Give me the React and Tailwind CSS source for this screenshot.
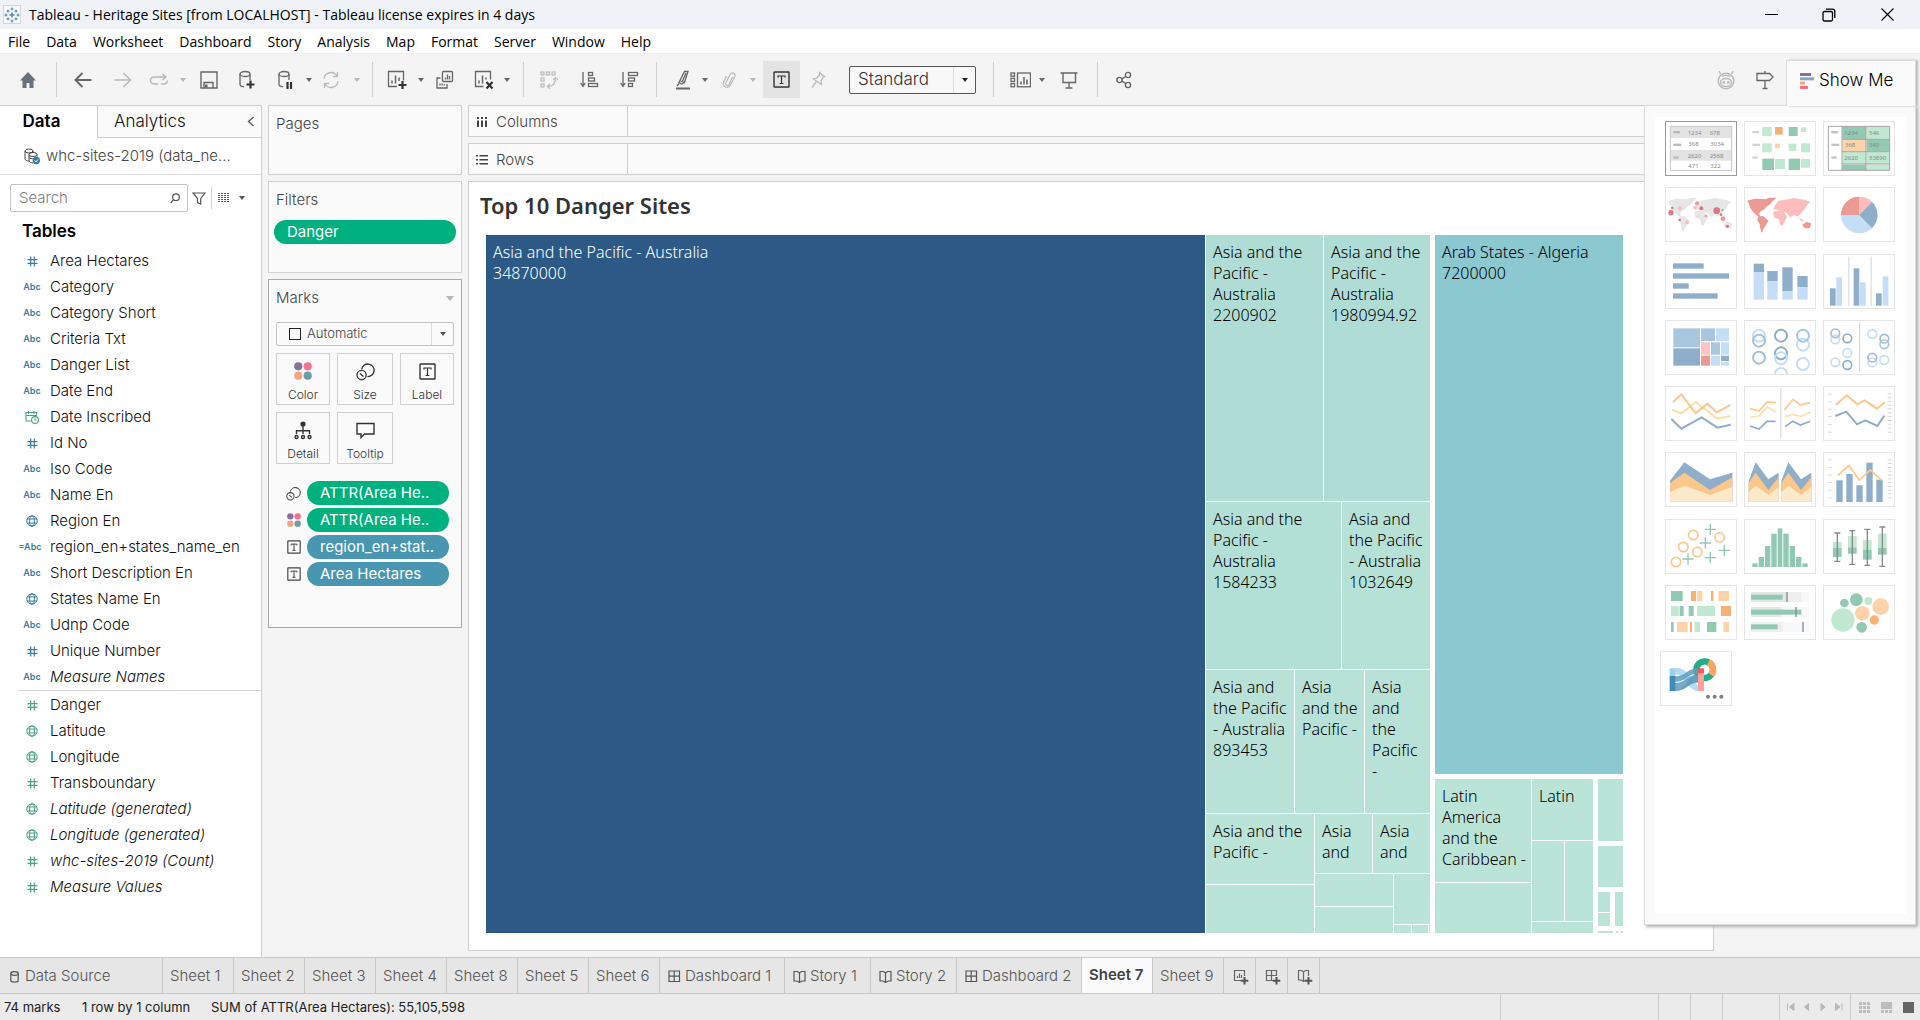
import React from 'react';

const UI = 'font-["Inter",sans-serif]';

/* ---------- small glyphs ---------- */

const Svg = ({ w = 20, h = 20, vb, className = '', children, ...p }) => (
  <svg width={w} height={h} viewBox={vb || `0 0 ${w} ${h}`} className={`shrink-0 ${className}`} fill="none" stroke="currentColor" aria-hidden="true" {...p}>
    {children}
  </svg>
);

const Caret = ({ className = '' }) => (
  <Svg w={8} h={5} className={className}>
    <path d="M0 0h8L4 5z" fill="currentColor" stroke="none" />
  </Svg>
);

const LabelGlyph = ({ size = 17 }) => (
  <Svg w={size} h={size} vb="0 0 17 17" strokeWidth="1.4">
    <rect x="1" y="1" width="15" height="15" rx="0.5" />
    <path d="M5 6.6V5h7v1.6M8.500 5v7.500M6.600 12.500h3.800" strokeWidth="1.200" />
  </Svg>
);

const ColorGlyph = ({ size = 18 }) => (
  <Svg w={size} h={size} vb="0 0 18 18" stroke="none">
    <circle cx="4.300" cy="4.300" r="4.100" fill="#86719b" />
    <circle cx="13.700" cy="4.300" r="4.100" fill="#f8708a" />
    <circle cx="4.300" cy="13.700" r="4.100" fill="#f3a57f" />
    <circle cx="13.700" cy="13.700" r="4.100" fill="#6d9aa8" />
  </Svg>
);

const SizeGlyph = ({ size = 19 }) => (
  <Svg w={size} h={size} vb="0 0 19 19" strokeWidth="1.300">
    <path d="M5.600 7.300a6.300 6.300 0 1 1 5.800 7.300" />
    <circle cx="5.600" cy="13" r="4.600" />
    <path d="M4 11.500l3.400 3" />
  </Svg>
);

const DetailGlyph = () => (
  <Svg w={18} h={19} strokeWidth="1.400">
    <circle cx="9" cy="3" r="2.600" fill="currentColor" stroke="none" />
    <path d="M9 4v9M2.500 13V9.700h13V13" />
    <circle cx="2.500" cy="16" r="1.500" />
    <circle cx="9" cy="16" r="1.500" />
    <circle cx="15.500" cy="16" r="1.500" />
  </Svg>
);

const TooltipGlyph = () => (
  <Svg w={19} h={17} strokeWidth="1.400">
    <path d="M1 1.500h17v10.500H8.500l-3.500 3.600V12H1z" />
  </Svg>
);

/* ---------- window chrome ---------- */

function TitleBar() {
  return (
    <header className="flex h-[29px] items-center bg-[#eff3f8] pl-[3px] text-[14px] text-black">
      <span className="flex h-[19px] w-[18px] items-center justify-center border border-[#d5d5d5] bg-[#f7f7f7] text-[#4d8fb9]">
        <Svg w={16} h={16} strokeWidth="1.200">
          <path d="M8 5.500v5M5.500 8h5" strokeWidth="1.600" />
          <path d="M8 .5v3M6.500 2h3M8 12.500v3M6.500 14h3M.5 8h3M2 6.500v3M12.500 8h3M14 6.500v3M4 2.800v2.800M2.600 4.200h2.800M12 2.800v2.800M10.600 4.200h2.800M4 10.400v2.800M2.600 11.800h2.800M12 10.400v2.800M10.600 11.800h2.800" />
        </Svg>
      </span>
      <h1 className="ml-2">Tableau - Heritage Sites [from LOCALHOST] - Tableau license expires in 4 days</h1>
      <div className="ml-auto flex pr-1">
        <button aria-label="Minimize" className="flex w-[58px] items-center justify-center">
          <Svg w={13} h={13}><path d="M0 6.500h13" /></Svg>
        </button>
        <button aria-label="Restore" className="flex w-[58px] items-center justify-center">
          <Svg w={14} h={14} strokeWidth="1.300">
            <rect x="1" y="3.500" width="9.500" height="9.500" rx="1.500" />
            <path d="M4 1.200h6.500a2.300 2.300 0 0 1 2.300 2.300V10" />
          </Svg>
        </button>
        <button aria-label="Close" className="flex w-[58px] items-center justify-center">
          <Svg w={13} h={13} strokeWidth="1.200"><path d="M.5.5l12 12M12.500.5l-12 12" /></Svg>
        </button>
      </div>
    </header>
  );
}

const MENUS = ['File', 'Data', 'Worksheet', 'Dashboard', 'Story', 'Analysis', 'Map', 'Format', 'Server', 'Window', 'Help'];

function MenuBar() {
  return (
    <nav className="flex h-[25px] items-center gap-4 border-b border-[#efefef] bg-white pl-2 text-[14px] text-black">
      {MENUS.map((m) => (
        <button key={m}>{m}</button>
      ))}
    </nav>
  );
}

/* ---------- toolbar ---------- */

const Tool = ({ label, w = 'w-10', dim, className = '', children }) => (
  <button aria-label={label} className={`flex h-[37px] shrink-0 items-center justify-center ${w} ${dim ? 'text-[#b9b9b9]' : 'text-[#666]'} ${className}`}>
    {children}
  </button>
);

const Drop = ({ label, w = 'w-2', dim }) => (
  <button aria-label={label} className={`flex h-[37px] shrink-0 items-center justify-center ${w} ${dim ? 'text-[#b9b9b9]' : 'text-[#666]'}`}>
    <Svg w={6} h={4}><path d="M0 0h6L3 4z" fill="currentColor" stroke="none" /></Svg>
  </button>
);

const Sep = ({ className = '' }) => <span className={`h-[35px] w-px shrink-0 bg-[#cfcfcf] ${className}`} />;

function Toolbar() {
  return (
    <div className={`flex h-[51px] items-center bg-[#f4f4f4] pr-1 ${UI}`}>
      <Tool label="Start page" w="w-[56px]">
        <Svg w={18} h={18} stroke="none"><path d="M9 1L1 9.500h2.500V17h4v-5h3v5h4V9.500H17z" fill="#65717e" /></Svg>
      </Tool>
      <Sep />
      <Tool label="Undo" className="ml-1.5">
        <Svg w={18} h={16} strokeWidth="2"><path d="M17.500 8H2M8.500 1L1.500 8l7 7" /></Svg>
      </Tool>
      <Tool label="Redo" dim>
        <Svg w={18} h={16} strokeWidth="1.500"><path d="M.5 8H16M9.500 1l7 7-7 7" /></Svg>
      </Tool>
      <Tool label="Replay" w="w-8" dim>
        <Svg w={20} h={14} strokeWidth="1.400"><path d="M9 11H5a3.500 3.500 0 0 1 0-7h12M13.500 1L17 4l-3.500 3M12 11h3a3.500 3.500 0 0 0 3.500-3.500" /></Svg>
      </Tool>
      <Drop label="Replay options" w="w-4" dim />
      <Tool label="Save" w="w-9">
        <Svg w={18} h={18} strokeWidth="1.400"><path d="M1 1h16v16H1zM4 17v-5.500h9V17" /><rect x="5" y="13.500" width="2.500" height="3" fill="currentColor" stroke="none" /></Svg>
      </Tool>
      <Tool label="New data source">
        <Svg w={18} h={20} strokeWidth="1.300">
          <ellipse cx="7" cy="4" rx="5" ry="2.500" /><path d="M2 4v10.500c0 1 1.500 2 4 2.300M12 4v6" /><path d="M12.500 10.500v8M8.500 14.500h8" strokeWidth="2.200" stroke="#333" />
        </Svg>
      </Tool>
      <Tool label="Pause updates" w="w-[38px]">
        <Svg w={18} h={20} strokeWidth="1.300">
          <ellipse cx="7" cy="4" rx="5" ry="2.500" /><path d="M2 4v10.500c0 1 1.500 2 4 2.300M12 4v6" /><path d="M10.500 12v7M14 12v7" strokeWidth="2.200" stroke="#333" />
        </Svg>
      </Tool>
      <Drop label="Pause options" />
      <Tool label="Refresh" w="w-9" dim>
        <Svg w={18} h={18} strokeWidth="1.300"><path d="M2 8a7 7 0 0 1 13-3M15.500 1v4.500H11M16 10a7 7 0 0 1-13 3M2.500 17v-4.500H7" /></Svg>
      </Tool>
      <Drop label="Refresh options" w="w-4" dim />
      <Sep className="ml-[7px]" />
      <Tool label="New worksheet" className="ml-1">
        <Svg w={20} h={20} strokeWidth="1.300">
          <path d="M10 16.500H1.500v-15h15v9" /><path d="M5 13.500v-3M8.500 13.500v-8M12 11V7.500" strokeWidth="1.500" /><path d="M15.500 11v8M11.500 15h8" strokeWidth="2.200" stroke="#333" />
        </Svg>
      </Tool>
      <Drop label="New worksheet options" />
      <Tool label="Duplicate">
        <Svg w={20} h={20} strokeWidth="1.300">
          <rect x="7.500" y="1.500" width="10" height="10" rx="1" /><path d="M10.500 9.500v-2M12.500 9.500v-5M14.500 9.500V6" /><path d="M5.500 8H2v10h10v-4M5 15.500v-2M7.200 15.500v-2M9.400 15.500v-1.500" />
        </Svg>
      </Tool>
      <Tool label="Clear sheet" w="w-[38px]">
        <Svg w={20} h={20} strokeWidth="1.300">
          <path d="M9.500 16.500H1.500v-15h15v8" /><path d="M5 13.500v-3M8.500 13.500v-8M12 9.500V7.500" strokeWidth="1.500" /><path d="M12.500 12l6 6.500M18.500 12l-6 6.500" strokeWidth="2.200" stroke="#333" />
        </Svg>
      </Tool>
      <Drop label="Clear options" />
      <Sep className="ml-3" />
      <Tool label="Swap rows and columns" w="w-[50px]" dim>
        <Svg w={18} h={18} strokeWidth="1.200">
          <rect x="1" y="1" width="3" height="3" /><rect x="6.500" y="1" width="3" height="3" /><rect x="12" y="1" width="3" height="3" /><rect x="1" y="7" width="3" height="3" /><rect x="1" y="13" width="3" height="3" />
          <path d="M7.500 15.500c5 0 8-3 8-8.500M13 9l2.500-2.500L18 9M10 13l-2.500 2.500L10 18" />
        </Svg>
      </Tool>
      <Tool label="Sort ascending" w="w-[30px]">
        <Svg w={19} h={17} strokeWidth="1.300"><path d="M3 1v14M.7 12L3 15.300 5.300 12" /><rect x="8.500" y="1.500" width="4" height="3" /><rect x="8.500" y="7" width="6" height="3" /><rect x="8.500" y="12.500" width="9" height="3" /></Svg>
      </Tool>
      <Tool label="Sort descending" w="w-[50px]">
        <Svg w={19} h={17} strokeWidth="1.300"><path d="M3 1v14M.7 12L3 15.300 5.300 12" /><rect x="8.500" y="1.500" width="9" height="3" /><rect x="8.500" y="7" width="6" height="3" /><rect x="8.500" y="12.500" width="4" height="3" /></Svg>
      </Tool>
      <Sep className="ml-0.5" />
      <Tool label="Highlight" w="w-9" className="ml-2">
        <Svg w={16} h={20} strokeWidth="1.300"><path d="M9.500 1.500h3.500L9.500 12.500l-3 1.500-2.500-1.500zM4.500 10.500l5 2M2 16l2-2.500M11 3L7.500 11" /><path d="M1 18.500h14" strokeWidth="2" /></Svg>
      </Tool>
      <Drop label="Highlight options" />
      <Tool label="Group members" dim>
        <Svg w={16} h={18} strokeWidth="1.200"><path d="M11.500 6L8 13.500c-1 2-4 .8-3.200-1.300L9 3.500c1.500-3 6-1.300 4.800 2L9.500 14c-2 4.200-8.500 2-7-2.500L5.500 5" /></Svg>
      </Tool>
      <Drop label="Group options" dim />
      <Tool label="Show mark labels" w="w-[37px]" className="ml-1.5 bg-[#e4e4e4] !text-[#333]">
        <LabelGlyph />
      </Tool>
      <Tool label="Fix axes" w="w-9" dim>
        <Svg w={16} h={18} strokeWidth="1.300"><path d="M9.500 1.500l5 4-1.500.6-2 4 .3 3.400-7.800-5.500 3-.8 3-3.200zM6 11l-4 5.500" /></Svg>
      </Tool>
      <div className="relative ml-[13px] flex h-[28px] w-[127px] shrink-0 items-center rounded-[2px] border border-[#555] bg-[#f8f8f8] text-[#333]">
        <select aria-label="Fit" className="h-full w-full appearance-none bg-transparent pl-2 text-[17px] font-light outline-none">
          <option>Standard</option>
        </select>
        <span className="pointer-events-none absolute right-0 flex h-full w-[22px] items-center justify-center border-l border-[#ddd]"><Svg w={6} h={4}><path d="M0 0h6L3 4z" fill="#222" stroke="none" /></Svg></span>
      </div>
      <Sep className="ml-[17px]" />
      <Tool label="Show or hide cards" w="w-9" className="ml-2">
        <Svg w={21} h={16} strokeWidth="1.300">
          <rect x="1" y="1" width="3.500" height="3.200" /><rect x="1" y="6.300" width="3.500" height="3.200" /><rect x="1" y="11.600" width="3.500" height="3.200" /><rect x="7.500" y="1" width="13" height="13.800" /><path d="M11 12.500V9.500M14 12.500V5M17 12.500V7.500" strokeWidth="1.600" />
        </Svg>
      </Tool>
      <Drop label="Card options" />
      <Tool label="Presentation mode" w="w-[46px]">
        <Svg w={18} h={18} strokeWidth="1.400"><path d="M.5 2h17M3 2v9.500h12.500V2M9 11.500v5M5.500 17h7" /></Svg>
      </Tool>
      <Sep className="ml-[5px]" />
      <Tool label="Share" w="w-[52px]">
        <Svg w={16} h={18} strokeWidth="1.400"><circle cx="3.500" cy="9" r="2.600" /><circle cx="12" cy="4" r="2.600" /><circle cx="12" cy="14" r="2.600" /><path d="M6 7.800L9.600 5.500M6 10.200l3.600 2.300" /></Svg>
      </Tool>
      <Tool label="Ask Data" w="w-9" dim className="ml-auto">
        <Svg w={20} h={20} strokeWidth="1.400"><circle cx="10" cy="11" r="7.800" /><ellipse cx="10" cy="12.500" rx="5.500" ry="4" /><path d="M4.500 4L3 1.200M15.500 4L17 1.200M6 6.500c2-1.500 6-1.500 8 0" /><path d="M6.500 12.500h2.500M11 12.500h2.500" strokeWidth="2.500" /></Svg>
      </Tool>
      <Tool label="Guide" w="w-[42px]">
        <Svg w={20} h={20} strokeWidth="1.300"><path d="M2 3.500h12.500l3.500 3.500-3.500 3.500H2zM10 1v2M10 10.500V19M7.500 18.500h5" /></Svg>
      </Tool>
      <button className="relative z-20 -mb-px flex h-[46px] w-[130px] shrink-0 items-center self-end border border-b-0 border-[#dcdcdc] bg-[#fafafa] pb-1.5 pl-[13px] text-[17px] text-black shadow-[2px_0_2px_#bbb]">
        <Svg w={15} h={16} stroke="none">
          <path d="M0 0h11v3H0z" fill="#86719b" /><path d="M0 4.300h14v3H0z" fill="#7fa6cc" /><path d="M0 8.600h5v3H0z" fill="#fba57c" /><path d="M0 12.900h8v3H0z" fill="#fc6f7d" />
        </Svg>
        <span className="ml-1 font-light">Show Me</span>
      </button>
    </div>
  );
}

/* ---------- data pane ---------- */

const DIMENSIONS = [
  ['num', 'Area Hectares'], ['abc', 'Category'], ['abc', 'Category Short'], ['abc', 'Criteria Txt'], ['abc', 'Danger List'],
  ['abc', 'Date End'], ['date', 'Date Inscribed'], ['num', 'Id No'], ['abc', 'Iso Code'], ['abc', 'Name En'], ['geo', 'Region En'],
  ['calc', 'region_en+states_name_en'], ['abc', 'Short Description En'], ['geo', 'States Name En'], ['abc', 'Udnp Code'],
  ['num', 'Unique Number'], ['abc', 'Measure Names', true],
];
const MEASURES = [
  ['num', 'Danger'], ['geo', 'Latitude'], ['geo', 'Longitude'], ['num', 'Transboundary'], ['geo', 'Latitude (generated)', true],
  ['geo', 'Longitude (generated)', true], ['num', 'whc-sites-2019 (Count)', true], ['num', 'Measure Values', true],
];

function FieldIcon({ kind }) {
  if (kind === 'abc') return <span className="text-[9px] font-semibold">Abc</span>;
  if (kind === 'calc') return <span className="-ml-1 text-[9px] font-semibold">=Abc</span>;
  if (kind === 'date')
    return (
      <Svg w={14} h={14} className="text-[#46a583]" strokeWidth="1.100">
        <path d="M6 11H1V2.500h10.500V6M1 5.500h10.500M3.500 1v3M9 1v3" /><circle cx="10" cy="10" r="3.400" /><path d="M10 8.300V10h1.500" />
      </Svg>
    );
  if (kind === 'geo')
    return (
      <Svg w={12} h={12} strokeWidth="1"><circle cx="6" cy="6" r="5.200" /><ellipse cx="6" cy="6" rx="2.500" ry="5.200" /><path d="M1.500 4h9M1.500 8h9" /></Svg>
    );
  return <Svg w={11} h={11} strokeWidth="1.200"><path d="M3.700.5v10M7.300.5v10M.5 3.700h10M.5 7.300h10" /></Svg>;
}

const FieldList = ({ fields, color }) => (
  <ul>
    {fields.map(([kind, name, generated]) => (
      <li key={name}>
        <button className="flex h-[26px] w-full items-center pl-[14px] text-left">
          <span className={`flex w-9 items-center justify-center ${color}`}><FieldIcon kind={kind} /></span>
          <span className={generated ? 'italic' : ''}>{name}</span>
        </button>
      </li>
    ))}
  </ul>
);

function DataPane() {
  return (
    <aside className="flex w-[262px] shrink-0 flex-col border-t border-r border-[#cfcfcf] bg-white text-[15px] text-[#111]">
      <div className="flex h-[32px]" role="tablist">
        <button role="tab" aria-selected="true" className="w-[97px] pr-[14px] text-center text-[17px] font-semibold text-black">Data</button>
        <div className="flex flex-1 items-center justify-between border-b border-l border-[#cfcfcf] bg-[#fafafa] pr-[6px] pl-4">
          <button role="tab" aria-selected="false" className="text-[17px] font-light">Analytics</button>
          <button aria-label="Collapse" className="text-[#555]"><Svg w={8} h={11} strokeWidth="1.300"><path d="M6.500 1l-5 4.500 5 4.500" /></Svg></button>
        </div>
      </div>
      <button className="flex h-[37px] items-center border-b border-[#dedede] pl-6 text-[#444]">
        <Svg w={16} h={17} strokeWidth="1">
          <ellipse cx="5" cy="3" rx="4" ry="2" /><path d="M1 3v8c0 1 2 2 4 2M9 3v1" /><ellipse cx="9" cy="6.500" rx="4" ry="2" /><path d="M5 6.500v6c0 1.500 2 2.500 4 2.500M13 6.500v2M5 9.500c1 1 3 1.500 4.500 1" />
          <circle cx="12.300" cy="12.500" r="3.700" fill="#2f7fa6" stroke="none" /><path d="M10.500 12.500l1.400 1.400 2.400-2.600" stroke="#fff" />
        </Svg>
        <span className="ml-[6px] font-light">whc-sites-2019 (data_ne...</span>
      </button>
      <div className="mt-[9px] flex h-7 items-center pl-[10px]">
        <label className="flex h-7 w-[178px] items-center rounded-[2px] border border-[#c4c4c4] pr-[7px] text-[#555]">
          <input type="search" placeholder="Search" aria-label="Search" className="w-0 flex-1 bg-transparent pl-2 text-[15px] font-light outline-none placeholder:text-[#808080]" />
          <Svg w={10} h={11} strokeWidth="1.200"><circle cx="6" cy="4.200" r="3.300" /><path d="M3.600 6.700L.6 10" /></Svg>
        </label>
        <button aria-label="Filter fields" className="ml-1 text-[#555]"><Svg w={14} h={13} strokeWidth="1.200"><path d="M1 1h12L8.700 6.500V12L5.500 10.500v-4z" /></Svg></button>
        <span className="ml-[5px] h-[22px] w-px bg-[#cfcfcf]" />
        <button aria-label="View options" className="ml-[6px] flex items-center gap-[9px] text-[#555]">
          <Svg w={12} h={10} strokeWidth="1" strokeDasharray="2 1" shapeRendering="crispEdges"><path d="M0 .5h12M0 2.500h12M0 4.500h12M0 6.500h12M0 8.500h12" /></Svg>
          <Svg w={6} h={4}><path d="M0 0h6L3 4z" fill="#555" stroke="none" /></Svg>
        </button>
      </div>
      <h2 className="mt-[7px] mb-[5px] pl-[22px] text-[17px] leading-6 font-semibold text-black">Tables</h2>
      <div className="font-light">
        <FieldList fields={DIMENSIONS} color="text-[#3a7d9d]" />
        <hr className="mb-px ml-[18px] border-[#d4d4d4]" />
        <FieldList fields={MEASURES} color="text-[#46a583]" />
      </div>
    </aside>
  );
}

/* ---------- cards ---------- */

const Pill = ({ color, children }) => (
  <button className={`h-6 flex-1 rounded-full pl-[13px] text-left text-[15px] leading-6 text-white ${color}`}>{children}</button>
);

const MarkButton = ({ icon, children }) => (
  <button className="flex h-[52px] flex-col items-center border border-[#d0d0d0] bg-[#fafafa] text-[12px] text-[#333]">
    <span className="flex h-[34px] items-center">{icon}</span>
    <span className="leading-[14px] font-light">{children}</span>
  </button>
);

function Cards() {
  return (
    <div className="ml-[6px] flex w-[194px] shrink-0 flex-col gap-[6px] text-[#444]">
      <section className="h-[70px] border border-[#cfcfcf] bg-[#fafafa] pt-[6px] pl-[7px]">
        <h2 className="text-[15px] leading-6 font-light">Pages</h2>
      </section>
      <section className="h-[92px] border border-[#cfcfcf] bg-[#fafafa] px-[5px] pt-[6px]">
        <h2 className="pl-[2px] text-[15px] leading-6 font-light">Filters</h2>
        <div className="mt-2 flex"><Pill color="bg-[#00b180]">Danger</Pill></div>
      </section>
      <section className="h-[349px] border border-[#a9a9a9] bg-[#fafafa] px-[7px] pt-[6px]">
        <div className="flex items-center justify-between">
          <h2 className="text-[15px] leading-6 font-light">Marks</h2>
          <button aria-label="Marks menu" className="text-[#b5b5b5]"><Caret /></button>
        </div>
        <div className="relative mt-3 flex h-6 items-center rounded-[2px] border border-[#c4c4c4]">
          <span className="pointer-events-none absolute left-3 size-3 border border-[#222]" />
          <select aria-label="Mark type" className="h-full w-full appearance-none bg-transparent pl-[30px] text-[13px] font-light outline-none">
            <option>Automatic</option>
          </select>
          <span className="pointer-events-none absolute right-0 flex h-full w-[22px] items-center justify-center border-l border-[#ddd]"><Svg w={6} h={4}><path d="M0 0h6L3 4z" fill="#555" stroke="none" /></Svg></span>
        </div>
        <div className="mt-[7px] grid grid-cols-[54fr_56fr_54fr] gap-[7px]">
          <MarkButton icon={<ColorGlyph />}>Color</MarkButton>
          <MarkButton icon={<SizeGlyph />}>Size</MarkButton>
          <MarkButton icon={<LabelGlyph />}>Label</MarkButton>
          <MarkButton icon={<DetailGlyph />}>Detail</MarkButton>
          <MarkButton icon={<TooltipGlyph />}>Tooltip</MarkButton>
        </div>
        <div className="mt-[17px] flex flex-col gap-[3px] pr-[5px]">
          {[
            [<SizeGlyph size={15} />, 'ATTR(Area He..', 'bg-[#00b180]'],
            [<ColorGlyph size={14} />, 'ATTR(Area He..', 'bg-[#00b180]'],
            [<LabelGlyph size={14} />, 'region_en+stat..', 'bg-[#4996b2]'],
            [<LabelGlyph size={14} />, 'Area Hectares', 'bg-[#4996b2]'],
          ].map(([icon, text, color], i) => (
            <div key={i} className="flex items-center">
              <span className="flex w-[31px] justify-center pl-[4px]">{icon}</span>
              <Pill color={color}>{text}</Pill>
            </div>
          ))}
        </div>
      </section>
    </div>
  );
}

/* ---------- treemap ---------- */

const leaf = (size, text, bg = 'bg-[#bae4d8]') => ({ size, text, bg });
const row = (size, gap, ...items) => ({ size, dir: 'flex-row', gap, items });
const col = (size, gap, ...items) => ({ size, dir: 'flex-col', gap, items });

const TREE = row(
  1, 'gap-[5px]',
  row(
    944, 'gap-px',
    leaf(719, ['Asia and the Pacific - Australia', '34870000'], 'bg-[#2c5985] text-white'),
    col(
      224, 'gap-px',
      row(266, 'gap-px',
        leaf(117, ['Asia and the Pacific - Australia', '2200902'], 'bg-[#afddd5]'),
        leaf(106, ['Asia and the Pacific - Australia', '1980994.92'], 'bg-[#afddd5]')),
      row(167, 'gap-px',
        leaf(135, ['Asia and the Pacific -', 'Australia', '1584233'], 'bg-[#b2dfd6]'),
        leaf(88, ['Asia and the Pacific - Australia', '1032649'], 'bg-[#b6e1d7]')),
      row(143, 'gap-px',
        leaf(88, ['Asia and the Pacific - Australia', '893453'], 'bg-[#b8e2d8]'),
        leaf(69, ['Asia and the Pacific -'], 'bg-[#b8e2d8]'),
        leaf(65, ['Asia and the Pacific -'], 'bg-[#b8e2d8]')),
      row(119, 'gap-px',
        col(108, 'gap-px', leaf(70, ['Asia and the Pacific -']), leaf(48)),
        col(115, 'gap-px',
          row(59, 'gap-px', leaf(57, ['Asia and']), leaf(57, ['Asia and'])),
          row(59, 'gap-px',
            col(78, 'gap-px', leaf(32), leaf(26)),
            col(36, 'gap-px', leaf(50), row(8, 'gap-px', leaf(17), leaf(17), leaf(1))))))),
  ),
  col(
    188, 'gap-[5px]',
    leaf(539, ['Arab States - Algeria', '7200000'], 'bg-[#8cc8d0]'),
    row(154, 'gap-[5px]',
      row(158, 'gap-px',
        col(96, 'gap-px', leaf(103, ['Latin America and the Caribbean -']), leaf(50)),
        col(61, 'gap-px', leaf(61, ['Latin']), row(80, 'gap-px', leaf(32), leaf(28)), leaf(11))),
      col(25, 'gap-[5px]',
        leaf(63), leaf(42),
        row(35, 'gap-[5px]', col(12, 'gap-px', leaf(21), leaf(13)), leaf(8)),
        row(2, 'gap-[3px]', leaf(14), leaf(2), leaf(2))))),
);

function Tile({ node }) {
  const grow = { flexGrow: node.size };
  if (node.items)
    return (
      <div className={`flex min-h-0 min-w-0 basis-0 ${node.dir} ${node.gap}`} style={grow}>
        {node.items.map((n, i) => <Tile key={i} node={n} />)}
      </div>
    );
  return (
    <div className={`min-h-0 min-w-0 basis-0 overflow-hidden ${node.bg}`} style={grow}>
      {node.text && (
        <div className="py-[7px] pr-1 pl-[7px]">
          {node.text.map((t) => <p key={t}>{t}</p>)}
        </div>
      )}
    </div>
  );
}

const Shelf = ({ label, icon }) => (
  <div className="flex h-8 border border-[#cfcfcf] bg-[#fafafa]">
    <div className="flex w-[159px] items-center gap-2 border-r border-[#cfcfcf] pt-0.5 pl-[7px] text-[15px] font-light text-[#444]">{icon}{label}</div>
  </div>
);

function Canvas() {
  return (
    <main className="mr-[206px] ml-[6px] flex min-w-0 flex-1 flex-col gap-[6px] pb-[6px]">
      <Shelf label="Columns" icon={<Svg w={12} h={10} stroke="none" className="text-[#444]"><path d="M1 0h2v2H1zM5 0h2v2H5zM9 0h2v2H9zM1 3.500h2V10H1zM5 3.500h2V10H5zM9 3.500h2V10H9z" fill="currentColor" /></Svg>} />
      <Shelf label="Rows" icon={<Svg w={12} h={10} stroke="none" className="text-[#444]"><path d="M0 0h2v1.500H0zM3.500 0H12v1.500H3.500zM0 4h2v1.500H0zM3.500 4H12v1.500H3.500zM0 8h2v1.500H0zM3.500 8H12v1.500H3.500z" fill="currentColor" /></Svg>} />
      <section className='flex flex-1 flex-col border border-[#cfcfcf] bg-white pr-[90px] pb-[17px] pl-[17px] font-["Noto_Sans",sans-serif]'>
        <h2 className="-ml-[6px] pt-[9px] text-[22px] leading-7 font-semibold text-[#333]">Top 10 Danger Sites</h2>
        <div className="mt-4 flex flex-1 text-[16px] leading-[21px] font-light text-black"><Tile node={TREE} /></div>
      </section>
    </main>
  );
}

/* ---------- show me ---------- */

const LAND = 'M85 303l25-6 30 2 10-2 12 4-8 12-12 8-6 8-9 4-7 8 4 11-8-3-13-11-9-14-4-12zM145 295l27-1-10 10-12 5zM118 350h15l15 13-7 13-8 12-4 12-5-14-2-14-7-10zM163 336l17-4 14 4 10 15-6 12-7 15-8-3-3-16-15-6zM163 329l5-12 10-14 17-2 30-6 30 5 19 6-9 9-7 12-8 8-8 10-8 6-9-6-10 8-12-13-10-4-12-5zM238 352l16 10-6 4zM250 376l12-9 14 4-3 14-15 1z';
const B = '#8eaeca', L = '#c4dff5', G = '#91c9b2', g = '#c1e8d0', o = '#ffd2aa';
const rects = (list) => list.map(([x, y, w, h, f], i) => <rect key={i} x={x} y={y} width={w} height={h} fill={f} />);
const dots = (list) => list.map(([cx, cy, r, f], i) => <circle key={i} cx={cx} cy={cy} r={r} fill={f} />);
const rings = (list, w = 4) => list.map(([cx, cy, r, c], i) => <circle key={i} cx={cx} cy={cy} r={r} fill="none" stroke={c} strokeWidth={w} />);
const line = (d, c, w = 5) => <path d={d} fill="none" stroke={c} strokeWidth={w} />;
const cells = (list, fill) => list.map(([x, y, t], i) => <text key={i} x={x} y={y} fontSize="18" fill={fill} className="font-sans">{t}</text>);

const THUMBS = [
  ['Text table', 75, 63, <>
    <rect x="91" y="79" width="184" height="132" fill="#fff" stroke="#c6c6c6" strokeWidth="3" />
    {rects([[93, 81, 180, 33, '#e3e3e3'], [93, 150, 180, 32, '#e3e3e3'], [100, 93, 20, 7, '#bbb'], [100, 131, 24, 7, '#bbb'], [100, 169, 16, 7, '#bbb']])}
    {cells([[143, 104, '1234'], [209, 104, '678'], [145, 139, '368'], [211, 139, '3034'], [143, 173, '2620'], [209, 173, '2568'], [145, 203, '471'], [211, 203, '322']], '#8a8a8a')}
  </>],
  ['Heat map', 312, 63, rects([[337, 93, 20, 7, '#d3d3d3'], [337, 131, 23, 7, '#d3d3d3'], [337, 169, 16, 7, '#d3d3d3'], [367, 81, 28, 27, g], [405, 81, 23, 23, '#f7b273'], [446, 81, 27, 27, G], [483, 82, 16, 14, g], [367, 130, 28, 27, g], [405, 131, 15, 14, o], [446, 131, 23, 22, g], [483, 130, 27, 27, g], [367, 176, 35, 34, G], [405, 177, 30, 30, g], [446, 176, 34, 34, G], [483, 177, 27, 26, g]])],
  ['Highlight table', 549, 63, <>
    {rects([[565, 79, 184, 132, '#fff'], [607, 79, 71, 40, G], [680, 79, 69, 40, g], [607, 119, 71, 35, o], [680, 119, 69, 35, G], [607, 156, 71, 36, g], [680, 156, 69, 36, g], [607, 194, 71, 17, G], [680, 194, 69, 17, g], [574, 93, 20, 7, '#c4c4c4'], [574, 131, 24, 7, '#c4c4c4'], [574, 169, 16, 7, '#c4c4c4']])}
    {line('M565 79h184v132H565zM606 79v132M678 79v132M606 118h143M606 155h143M606 192h143', '#a5a5a5', 3)}
    {cells([[613, 104, '1234'], [687, 104, '546'], [615, 142, '368'], [687, 142, '340'], [613, 180, '2620'], [687, 180, '53890']], '#7d8f86')}
  </>],
  ['Symbol map', 75, 262, <><path d={LAND} fill="#e6e6e6" />{dots([[93, 339, 8, '#d97786'], [97, 325, 4, '#d97786'], [120, 326, 6, '#fcb9b9'], [171, 311, 6, '#ec9a96'], [165, 324, 5, '#fcb9b9'], [184, 326, 6, '#d97786'], [198, 349, 4, '#ec9a96'], [119, 361, 4, '#d97786'], [141, 368, 6, '#fcb9b9'], [230, 333, 10, '#d97786'], [247, 331, 4, '#ec9a96'], [243, 345, 4, '#d97786'], [249, 357, 7, '#ec9a96'], [262, 380, 5, '#d97786']])}</>],
  ['Filled map', 312, 262, <g transform="translate(237 0)"><path d={LAND} fill="#febdbc" /><path d="M85 303l25-6 30 2 10-2 12 4-8 12-12 8-6 8-9 4-7 8 4 11-8-3-13-11-9-14-4-12zM145 295l27-1-10 10-12 5zM118 350h15l15 13-7 13-8 12-4 12-5-14-2-14-7-10zM250 376l12-9 14 4-3 14-15 1z" fill="#ec9a94" /></g>],
  ['Pie chart', 549, 262, <><circle cx="658" cy="346" r="55" fill={L} /><path d="M658 346V291A55 55 0 0 0 603 346z" fill="#ec9a94" /><path d="M658 346V291a55 55 0 0 1 38 16z" fill="#febdbc" /><path d="M658 346l38-39a55 55 0 0 1 0 78z" fill={B} /></>],
  ['Horizontal bars', 75, 462, rects([[99, 490, 92, 16, B], [99, 520, 168, 16, B], [99, 550, 47, 16, B], [99, 580, 134, 16, B]])],
  ['Stacked bars', 312, 462, rects([[341, 491, 31, 26, B], [341, 517, 31, 82, L], [382, 513, 31, 30, B], [382, 543, 31, 56, L], [427, 502, 31, 71, B], [427, 573, 31, 26, L], [472, 528, 31, 34, B], [472, 562, 31, 37, L]])],
  ['Side-by-side bars', 549, 462, rects([[625, 470, 3, 147, '#d6d6d6'], [692, 470, 3, 147, '#d6d6d6'], [570, 565, 17, 52, B], [589, 532, 17, 85, L], [641, 505, 17, 112, B], [660, 547, 17, 70, L], [708, 580, 17, 37, B], [728, 529, 17, 88, L]])],
  ['Treemap', 75, 660, rects([[100, 685, 80, 57, '#a9c6df'], [100, 745, 80, 52, B], [183, 685, 42, 38, '#a9c6df'], [228, 685, 39, 38, L], [183, 727, 27, 37, '#ffc3c0'], [213, 727, 27, 37, '#a9c6df'], [243, 727, 24, 37, L], [183, 767, 27, 30, '#ec9a94'], [213, 767, 27, 30, L], [243, 767, 24, 16, B], [243, 786, 24, 11, L]])],
  ['Circle views', 312, 660, rings([[357, 707, 18, L], [357, 722, 18, '#a4bfd6'], [357, 773, 18, '#a4bfd6'], [423, 707, 18, B], [423, 760, 18, B], [423, 775, 18, L], [423, 822, 18, L], [489, 734, 18, L], [489, 707, 18, '#a9c6df'], [489, 792, 18, L]], 6)],
  ['Side-by-side circles', 549, 660, <>{rects([[657, 667, 3, 148, '#d6d6d6']])}{rings([[586, 718, 13, L], [586, 700, 13, '#a4bfd6'], [622, 715, 13, B], [622, 759, 13, L], [586, 787, 13, L], [622, 795, 13, B], [697, 702, 13, L], [733, 733, 13, '#a9c6df'], [733, 716, 13, '#a4bfd6'], [697, 787, 13, L], [697, 773, 13, '#a4bfd6'], [733, 780, 13, L]], 5)}</>],
  ['Lines (continuous)', 75, 858, <>{line('M96 930l29 10 42-34 65 50 39-8', '#fde0a8', 6)}{line('M99 907l25-24 43 57 35-29 28 26 41-22', '#fdc78e', 6)}{line('M94 957l30 29 61-34 47 31 40-9', B, 6)}</>],
  ['Lines (discrete)', 312, 858, <>{rects([[421, 865, 3, 150, '#d6d6d6']])}{line('M331 952l26-4 25-27 25 15M433 951l25-8 25 6 28-13', '#fde0a8')}{line('M330 926l27 7 24-27 27 2M433 931l26-33 22 17 29-7', '#fdc78e')}{line('M330 978l27 9 24-23h26M435 980l23-16 23 11 30-11', B)}</>],
  ['Dual lines', 549, 858, <>{rects([882, 905, 927, 949, 973, 996].map((y) => [564, y - 1, 11, 3, '#d8d8d8']).concat([881, 893, 904, 915, 926, 938, 949, 961, 972, 984, 996].map((y) => [743, y - 1, 12, 3, '#d8d8d8'])))}{line('M587 915l33-29 32 27 22-12 37 25 23-19', '#fdc78e', 6)}{line('M586 948l33-13 32 38 25-12 36 17 21-31', B, 6)}</>],
  ['Area (continuous)', 75, 97, <><path d="M90 183l43-55 77 51 67-20v87H90z" fill={B} /><path d="M90 190l43-31 77 52 67-38v73H90z" fill="#fbc78b" /><path d="M90 217l43-19 77 28 67-24v44H90z" fill="#fbe9ca" /></>],
  ['Area (discrete)', 312, 97, <>{[0, 98].map((x) => <g key={x} transform={`translate(${x} 0)`}><path d="M326 184l21-56 38 51 31-20v87h-90z" fill={B} /><path d="M326 190l21-31 38 52 31-38v73h-90z" fill="#fbc78b" /><path d="M326 217l21-19 38 28 31-24v44h-90z" fill="#fbe9ca" /></g>)}</>],
  ['Dual combination', 549, 97, <>{rects([120, 143, 166, 188, 211, 234].map((y) => [564, y - 1, 11, 3, '#d8d8d8']).concat([120, 131, 143, 154, 166, 177, 188, 200, 211, 222, 234].map((y) => [743, y - 1, 12, 3, '#d8d8d8'])))}{rects([[589, 182, 19, 65, B], [619, 163, 19, 84, B], [649, 197, 19, 50, B], [679, 129, 19, 118, B], [709, 180, 19, 67, B]])}{line('M594 167l33-30 31 45 33-31 34 31', '#fdc78e')}</>],
  ['Scatter plot', 75, 297, <>{rings([[160, 345, 14, '#fdc78e'], [239, 352, 14, '#fdc78e'], [130, 381, 14, '#fdc78e'], [172, 396, 14, '#fdc78e'], [108, 426, 14, '#fdc78e']], 5)}{line('M194 328h34M211 311v34M179 369h34M196 352v34M236 391h34M253 374v34M127 417h34M144 400v34M194 413h34M211 396v34', G, 4)}</>],
  ['Histogram', 312, 297, rects([[337, 430, 16, 11, G], [356, 411, 16, 30, G], [375, 378, 16, 63, G], [394, 341, 16, 100, G], [413, 325, 14, 116, G], [430, 341, 16, 100, G], [449, 378, 16, 63, G], [468, 411, 16, 30, G], [487, 430, 16, 11, G]])],
  ['Box plot', 549, 297, <>{rects([[579, 366, 26, 18, g], [579, 384, 26, 27, G], [624, 348, 26, 34, g], [624, 382, 26, 19, G], [669, 360, 26, 29, g], [669, 389, 26, 30, G], [714, 341, 26, 43, g], [714, 384, 26, 20, G]])}{line('M592 339v85M583 339h18M583 424h18M637 332v101M628 332h18M628 433h18M682 328v108M673 328h18M673 436h18M727 321v118M718 321h18M718 439h18', '#8b8b8b', 4)}</>],
  ['Gantt', 75, 495, rects([[93, 513, 35, 30, G], [153, 513, 15, 30, '#f7b273'], [171, 513, 16, 30, o], [213, 513, 7, 30, '#f7b273'], [235, 513, 32, 30, o], [93, 558, 23, 30, g], [119, 558, 12, 30, G], [146, 558, 15, 30, G], [171, 558, 54, 30, g], [243, 558, 30, 30, '#f7b273'], [93, 606, 8, 30, G], [111, 606, 32, 30, o], [150, 606, 6, 30, '#f7b273'], [164, 606, 16, 30, g], [201, 606, 28, 30, G], [250, 606, 17, 30, o]])],
  ['Bullet graph', 312, 495, rects([[333, 516, 174, 30, '#f6f8fa'], [333, 516, 151, 30, '#efefef'], [333, 516, 110, 30, '#e6e6e6'], [333, 524, 95, 15, G], [439, 516, 4, 30, '#8b8b8b'], [333, 561, 174, 30, '#f6f8fa'], [333, 561, 92, 30, '#e6e6e6'], [333, 569, 151, 15, G], [466, 561, 4, 30, '#8b8b8b'], [333, 606, 174, 30, '#f6f8fa'], [333, 606, 95, 30, '#efefef'], [333, 613, 80, 15, G], [487, 606, 4, 30, '#8b8b8b']])],
  ['Packed bubbles', 549, 495, dots([[613, 549, 13, G], [649, 539, 19, G], [685, 543, 12, g], [722, 560, 25, o], [609, 600, 35, g], [667, 580, 22, o], [703, 600, 14, '#f7b273'], [665, 622, 16, G]])],
];

const Thumb = ({ label, x, y, active, children }) => (
  <button aria-label={label} className={`h-[55px] w-[72px] border bg-white ${active ? 'border-[#999]' : 'border-[#e6e6e6]'}`}>
    <svg viewBox={`${x + 3} ${y + 3} 210 159`} className="block h-full w-full">{children}</svg>
  </button>
);

function ShowMe() {
  return (
    <aside className="absolute top-0 right-1 bottom-[32px] z-10 w-[272px] border border-[#dcdcdc] bg-[#fafafa] pt-[11px] pr-[9px] pb-[10px] pl-[10px] shadow-[2px_2px_3px_#b0b0b0]">
      <div className="h-full bg-white px-[10px] pt-1">
        <div className="grid h-[519px] grid-cols-[72px_72px_72px] content-between gap-x-[7px]">
          {THUMBS.map(([label, x, y, art], i) => (
            <Thumb key={label} label={label} x={x} y={y} active={i === 0}>{art}</Thumb>
          ))}
        </div>
        <div className="mt-[11px] -ml-[5px]">
          <Thumb label="More charts" x={60} y={693}>
            <circle cx="194" cy="749" r="25" fill="none" stroke="#22ae87" strokeWidth="19" />
            <path d="M205 727a25 25 0 0 1 9 38" fill="none" stroke="#fda55e" strokeWidth="19" />
            <path d="M105 744c35 0 35 69 70 69v-18c-25 0-25-51-70-51z" fill="#b4dcf4" />
            <path d="M105 744c35 0 40 20 70 55v14c-40-6-35-50-70-50z" fill="#b4dcf4" />
            <path d="M105 812c35 0 35-48 70-48v23c-30 0-35 25-70 25zM105 769c35 0 35-24 70-24v16c-35 0-35 24-70 24z" fill="#5f9cc0" fillOpacity="0.850" />
            <path d="M105 788c35 0 35-24 70-24v24c-35 0-35 25-70 25z" fill="#5f9cc0" fillOpacity="0.850" />
            {rects([[89, 745, 17, 24, '#9ad3f2'], [89, 768, 17, 45, '#3f8db5'], [174, 745, 18, 15, '#f05a5a'], [174, 760, 18, 53, '#ffa09d']])}
            {dots([[204, 830, 6, '#808080'], [224, 830, 6, '#808080'], [244, 830, 6, '#808080']])}
          </Thumb>
        </div>
      </div>
    </aside>
  );
}

/* ---------- bottom bars ---------- */

const GridGlyph = () => <Svg w={13} h={13} strokeWidth="1.200"><path d="M1 1h10.500v10.500H1zM6.200 1v10.500M1 6.200h10.500" /></Svg>;
const BookGlyph = () => <Svg w={13} h={13} strokeWidth="1.200"><path d="M6.500 3L4.500 1.500H1V11h3l2.500 1.500L9 11h3V1.500H8.500zM6.500 3v9" /></Svg>;

const SHEETS = [
  ['Sheet 1'], ['Sheet 2'], ['Sheet 3'], ['Sheet 4'], ['Sheet 8'], ['Sheet 5'], ['Sheet 6'],
  ['Dashboard 1', GridGlyph, 'w-[125px] pl-2'], ['Story 1', BookGlyph, 'w-[86px] pl-2'], ['Story 2', BookGlyph, 'w-[86px] pl-2'],
  ['Dashboard 2', GridGlyph, 'w-[125px] pl-2'], ['Sheet 7'], ['Sheet 9'],
];

function SheetTabs() {
  return (
    <nav className="flex h-[37px] border-t border-b border-[#c9c9c9] bg-[#e6e6e6] text-[15px] text-[#555]">
      <button className="flex w-[163px] items-center gap-[6px] border-r border-[#c9c9c9] pt-0.5 pl-[10px] font-light">
        <Svg w={9} h={12} strokeWidth="1.200"><ellipse cx="4.500" cy="2.500" rx="3.700" ry="1.800" /><path d="M.8 2.500v7c0 2.200 7.400 2.200 7.400 0v-7" /></Svg>
        Data Source
      </button>
      {SHEETS.map(([name, Glyph, w]) => (
        <button key={name} className={`flex shrink-0 items-center gap-1 border-r border-[#c9c9c9] whitespace-nowrap ${w || 'w-[71px] pl-[7px]'} ${name === 'Sheet 7' ? 'bg-[#fafafa] font-semibold text-[#444]' : 'pt-0.5 font-light'}`}>
          {Glyph && <Glyph />}
          {name}
        </button>
      ))}
      {[
        ['New worksheet', <path key="a" d="M8 11.500H1.500v-10h10V7M4.500 9V7M6.500 9V4.500M8.500 9V6" />],
        ['New dashboard', <path key="b" d="M8 11.500H1.500v-10h10V7M6.500 1.500v10M1.500 6.500h10" />],
        ['New story', <path key="c" d="M8 11.500l-1.500 1L4 11H1.500V1.500h3l2 1.500 2-1.500h3V7M6.500 3v9" />],
      ].map(([label, art]) => (
        <button key={label} aria-label={label} className="flex w-8 items-center justify-center border-r border-[#c9c9c9] pt-0.5 pl-0.5 text-[#666]">
          <Svg w={16} h={16} strokeWidth="1.200">{art}<path d="M11.500 8v7.500M7.800 11.800h7.500" stroke="#555" strokeWidth="2" /></Svg>
        </button>
      ))}
    </nav>
  );
}

function StatusBar() {
  return (
    <footer className="flex h-[26px] items-stretch bg-[#ebebeb] text-[13px] text-[#222]">
      <span className="w-[82px] self-center pt-0.5 pl-1">74 marks</span>
      <span className="w-[126px] self-center pt-0.5">1 row by 1 column</span>
      <span className="self-center pt-0.5 pl-[3px]">SUM of ATTR(Area Hectares): 55,105,598</span>
      <span className="ml-auto w-[158px] border-l border-[#cbcbcb]" />
      <span className="w-8 border-l border-[#cbcbcb]" />
      <span className="w-8 border-l border-[#cbcbcb]" />
      <span className="w-[57px] border-l border-[#cbcbcb]" />
      <span className="flex w-[71px] items-center justify-center gap-1 border-l border-[#cbcbcb] text-[#b8b8b8]">
        {[['First', 'M2.500 1.500v7M9 1.500v7L4.500 5z'], ['Previous', 'M7.500 1.500v7L3.500 5z'], ['Next', 'M4 1.500v7L8 5z'], ['Last', 'M9 1.500v7M2.500 1.500v7L7 5z']].map(([l, d]) => (
          <button key={l} aria-label={l}><Svg w={12} h={10}><path d={d} fill="currentColor" strokeWidth="1" /></Svg></button>
        ))}
      </span>
      <span className="flex w-[70px] items-center gap-[11px] border-l border-[#cbcbcb] pl-2 text-[#bdbdbd]">
        <button aria-label="Sheet sorter"><Svg w={11} h={11} strokeWidth="3" strokeDasharray="3 1"><path d="M0 1.500h11M0 5.500h11M0 9.500h11" /></Svg></button>
        <button aria-label="Filmstrip"><Svg w={11} h={11} stroke="none"><path d="M0 0h11v7H0zM0 8h3v3H0zM4 8h3v3H4zM8 8h3v3H8z" fill="currentColor" /></Svg></button>
        <button aria-label="Tabs view"><Svg w={11} h={11} stroke="none"><path d="M0 0h11v11H0z" fill="#666" /></Svg></button>
      </span>
    </footer>
  );
}

export default function App() {
  return (
    <div className='flex min-h-screen flex-col bg-[#f4f4f4] font-["Open_Sans",sans-serif]'>
      <TitleBar />
      <MenuBar />
      <Toolbar />
      <div className={`relative flex flex-1 ${UI}`}>
        <DataPane />
        <Cards />
        <Canvas />
        <ShowMe />
      </div>
      <div className={UI}>
        <SheetTabs />
        <StatusBar />
      </div>
    </div>
  );
}
